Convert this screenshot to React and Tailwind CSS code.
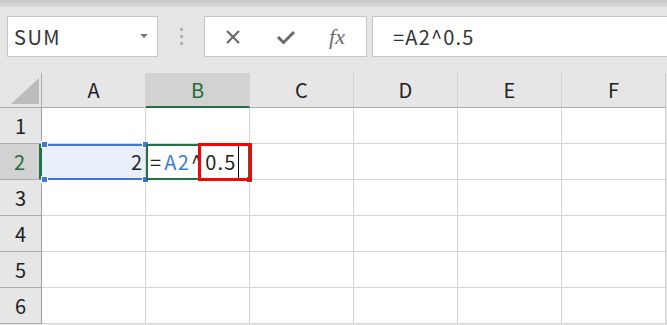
import { useState } from 'react';

const COLS = ['A', 'B', 'C', 'D', 'E', 'F'];
const ROWS = [1, 2, 3, 4, 5, 6];

function Handle({ className }) {
  return (
    <span
      className={`absolute w-[5px] h-[5px] bg-[#3c78d8] border border-white box-content ${className}`}
    />
  );
}

function CornerCell() {
  return (
    <div className="relative bg-[#e6e6e6] border-r border-b border-r-[#ababab] border-b-[#ababab]">
      <svg className="absolute left-[10px] top-[4px]" width="30" height="28" viewBox="0 0 30 28">
        <polygon points="1,27 29,27 29,1" fill="#bcbcbc" />
      </svg>
    </div>
  );
}

function ColHeader({ label }) {
  const active = label === 'B';
  return (
    <div
      className={`flex items-center justify-center text-[20px] border-r border-r-[#d2d2d2] ${
        active
          ? 'bg-[#d2d2d2] text-[#1e6b3c] border-b-2 border-b-[#217346]'
          : 'bg-[#e6e6e6] text-[#222] border-b border-b-[#ababab]'
      }`}
    >
      {label}
    </div>
  );
}

function RowHeader({ n }) {
  const active = n === 2;
  return (
    <div
      className={`flex items-center justify-center text-[20px] border-b border-b-[#ababab] ${
        active
          ? 'bg-[#d2d2d2] text-[#1e6b3c] border-r-[3px] border-r-[#217346]'
          : 'bg-[#e6e6e6] text-[#222] border-r border-r-[#9f9f9f]'
      }`}
    >
      {n}
    </div>
  );
}

function Cell({ col, row }) {
  if (row === 2 && col === 'A') {
    return (
      <div className="relative bg-[#e9eff9] border-r border-b border-[#d4d4d4] flex items-center justify-end pr-[3px] text-[20px] text-[#222]">
        <span className="absolute left-[1px] right-0 top-0 h-[2px] bg-[#3c78d8]" />
        <span className="absolute left-[1px] right-0 bottom-[-1px] h-[2px] bg-[#3c78d8]" />
        <Handle className="left-[-1px] top-[-3px]" />
        <Handle className="right-[-4px] top-[-3px]" />
        <Handle className="left-[-1px] bottom-[-4px]" />
        <Handle className="right-[-4px] bottom-[-4px]" />
        2
      </div>
    );
  }
  if (row === 2 && col === 'B') {
    return (
      <div className="relative bg-white border-r border-b border-[#d4d4d4] flex items-center pl-[4px] text-[20px] text-[#222] whitespace-nowrap tracking-[1.2px]">
        <span className="absolute left-0 right-[-1px] top-0 bottom-[-1px] border-2 border-[#217346] pointer-events-none" />
        <span className="absolute right-[-3px] bottom-[-3px] w-[5px] h-[5px] bg-[#217346]" />
        <span className="mr-[2px]">=</span>
        <span className="text-[#3c7fd0] mr-[1px]">A2</span>
        <span>^</span>
        <span className="ml-[2px]">0.5</span>
        <span className="inline-block w-px h-[32px] bg-black ml-[1px]" />
        <span className="absolute left-[52px] right-[-3px] top-[-1px] bottom-[-2px] border-[3px] border-[#ff0000]" />
      </div>
    );
  }
  return <div className="bg-white border-r border-b border-[#d4d4d4]" />;
}

export default function App() {
  const [name] = useState('SUM');
  const [formula] = useState('=A2^0.5');

  return (
    <div className="w-[667px] h-[325px] overflow-hidden bg-[#e6e6e6] font-['Noto_Sans_CJK_JP','Noto_Sans',sans-serif] flex flex-col">
      <div className="h-[3px] bg-[#cacaca]" />
      <div className="h-[4px] bg-[#d6d6d6]" />

      <div className="flex items-center pl-[7px] mt-[9px] h-[41px]">
        <div className="w-[151px] h-full bg-white border border-[#c6c6c6] flex items-center pl-[6px] pr-[9px]">
          <span className="flex-1 text-[20px] text-[#333] tracking-[1.5px]">{name}</span>
          <svg width="8" height="5" viewBox="0 0 8 5">
            <polygon points="0,0 8,0 4,4" fill="#777" />
          </svg>
        </div>
        <div className="w-[46px] flex flex-col items-center gap-[4px]">
          <span className="w-[3px] h-[3px] bg-[#b3b3b3]" />
          <span className="w-[3px] h-[3px] bg-[#b3b3b3]" />
          <span className="w-[3px] h-[3px] bg-[#b3b3b3]" />
        </div>
        <div className="w-[163px] h-full bg-white border border-[#c6c6c6] flex items-center">
          <div className="w-[56px] flex justify-center">
            <svg width="16" height="16" viewBox="0 0 16 16">
              <path d="M2 2 L14 14 M14 2 L2 14" stroke="#6a6a6a" strokeWidth="2.2" fill="none" />
            </svg>
          </div>
          <div className="w-[50px] flex justify-center">
            <svg width="20" height="16" viewBox="0 0 20 16">
              <path d="M2 8 L7.5 13.5 L18 3" stroke="#6a6a6a" strokeWidth="3" fill="none" strokeLinejoin="miter" />
            </svg>
          </div>
          <div className="w-[52px] flex justify-center">
            <span className="font-['Liberation_Serif',serif] italic text-[22px] text-[#6a6a6a] leading-none">
              fx
            </span>
          </div>
        </div>
        <div className="flex-1 ml-[5px] h-full bg-white border border-r-0 border-[#c6c6c6] flex items-center pl-[20px] text-[20px] text-[#333] tracking-[1.2px]">
          {formula}
        </div>
      </div>

      <div className="mt-[16px] grid grid-cols-[42px_repeat(6,104px)] grid-rows-[35px_repeat(6,36px)]">
        <CornerCell />
        {COLS.map(c => (
          <ColHeader key={c} label={c} />
        ))}
        {ROWS.map(r => [
          <RowHeader key={`h${r}`} n={r} />,
          ...COLS.map(c => <Cell key={`${c}${r}`} col={c} row={r} />),
        ])}
      </div>
    </div>
  );
}
